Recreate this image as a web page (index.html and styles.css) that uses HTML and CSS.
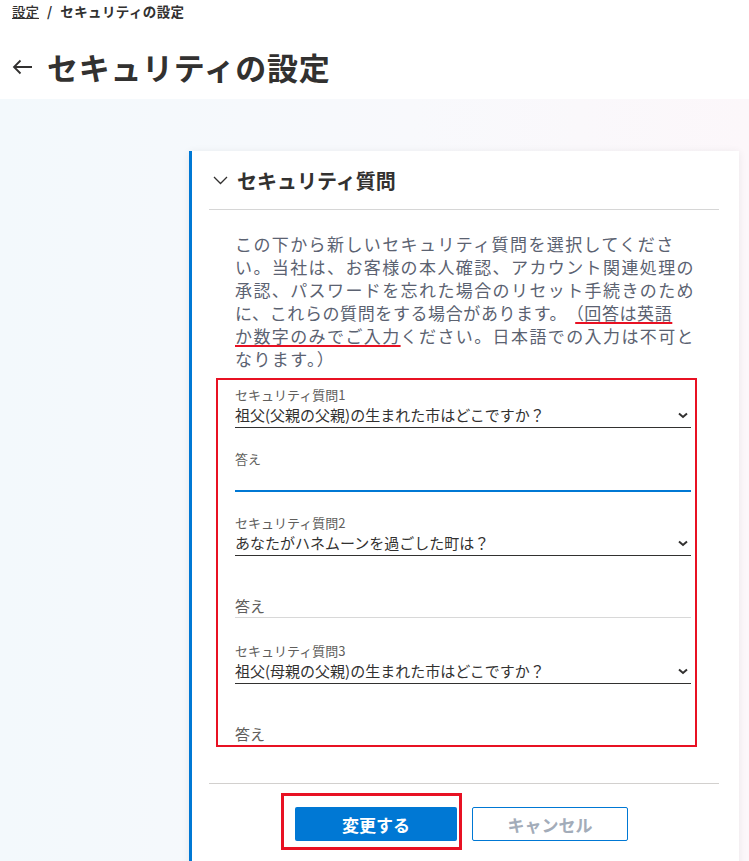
FILE: index.html
```html
<!DOCTYPE html>
<html lang="ja">
<head>
    <meta charset="UTF-8">
    <meta name="viewport" content="width=device-width, initial-scale=1.0">
    <title>セキュリティの設定</title>
    <link rel="stylesheet" href="styles.css">
</head>
<body>
    <header class="top">
        <nav class="crumbs">
            <a href="#">設定</a>
            <span class="sep">/</span>
            <span class="current">セキュリティの設定</span>
        </nav>
        <h1 class="page-title">
            <svg class="back" width="21" height="16" viewBox="0 0 21 16" fill="none" stroke="#323130" stroke-width="1.8">
                <path d="M20 8H2M8.5 1.5L2 8l6.5 6.5"/>
            </svg>
            セキュリティの設定
        </h1>
    </header>

    <main class="main">
        <section class="card">
            <div class="card-head">
                <svg class="toggle" width="15" height="9" viewBox="0 0 15 9" fill="none" stroke="#323130" stroke-width="1.3">
                    <path d="M1 1l6.5 6.5L14 1"/>
                </svg>
                <h2>セキュリティ質問</h2>
            </div>

            <div class="card-body">
                <p class="intro">
                    この下から新しいセキュリティ質問を選択してくださ<br>
                    い。当社は、お客様の本人確認、アカウント関連処理の<br>
                    承認、パスワードを忘れた場合のリセット手続きのため<br>
                    <span class="tight">に、これらの質問をする場合があります。<span class="mark gap">（回答は英語</span></span><br>
                    <span class="mark">か数字のみでご入力</span>ください。日本語での入力は不可と<br>
                    なります。）
                </p>

                <div class="fields">
                    <div class="qfield">
                        <label class="qlabel">セキュリティ質問1</label>
                        <div class="select">
                            <span>祖父(父親の父親)の生まれた市はどこですか？</span>
                            <svg class="caret" width="10" height="7" viewBox="0 0 10 7" fill="none" stroke="#323130" stroke-width="2"><path d="M1 1.5l4 3.5 4-3.5"/></svg>
                        </div>
                    </div>
                    <div class="answer focused">
                        <label class="alabel">答え</label>
                        <input class="ainput" type="text">
                    </div>

                    <div class="qfield">
                        <label class="qlabel">セキュリティ質問2</label>
                        <div class="select">
                            <span>あなたがハネムーンを過ごした町は？</span>
                            <svg class="caret" width="10" height="7" viewBox="0 0 10 7" fill="none" stroke="#323130" stroke-width="2"><path d="M1 1.5l4 3.5 4-3.5"/></svg>
                        </div>
                    </div>
                    <div class="answer">
                        <input class="ainput" type="text" placeholder="答え">
                    </div>

                    <div class="qfield">
                        <label class="qlabel">セキュリティ質問3</label>
                        <div class="select">
                            <span>祖父(母親の父親)の生まれた市はどこですか？</span>
                            <svg class="caret" width="10" height="7" viewBox="0 0 10 7" fill="none" stroke="#323130" stroke-width="2"><path d="M1 1.5l4 3.5 4-3.5"/></svg>
                        </div>
                    </div>
                    <div class="answer last">
                        <input class="ainput" type="text" placeholder="答え">
                    </div>
                </div>
            </div>

            <div class="card-foot">
                <span class="highlight">
                    <button class="btn primary">変更する</button>
                </span>
                <button class="btn secondary">キャンセル</button>
            </div>
        </section>
    </main>
</body>
</html>
```

FILE: styles.css
```css
body {
    margin: 0;
    font-family: "Noto Sans CJK JP", "Noto Sans", sans-serif;
    color: #323130;
    background: linear-gradient(90deg, #f3f9fc 0%, #f8f9fc 55%, #fcf7fa 100%);
    min-height: 100vh;
}
.top {
    background: white;
    height: 99px;
    padding: 2px 12px 0;
    box-sizing: border-box;
}
.crumbs {
    font-size: 13.5px;
    line-height: 18px;
    font-weight: 700;
    display: flex;
    gap: 8px;
}
.crumbs a {
    color: #323130;
    font-weight: 500;
    text-decoration: underline;
}
.crumbs .current {
    letter-spacing: 0.4px;
}
.page-title {
    margin: 27px 0 0;
    font-size: 31px;
    line-height: 40px;
    font-weight: 700;
    letter-spacing: 0.7px;
    display: flex;
    align-items: center;
    gap: 14px;
}
.page-title .back {
    flex: none;
}
.main {
    padding: 52px 10px 0 189px;
}
.card {
    width: 550px;
    box-sizing: border-box;
    background: white;
    border-left: 3px solid #0078d4;
    padding: 0 20px 30px 17px;
    box-shadow: 0 1px 8px rgba(0,0,0,0.07);
}
.card-head {
    height: 58px;
    display: flex;
    align-items: center;
    gap: 9px;
    padding-left: 4px;
    border-bottom: 1px solid #d6d6d6;
}
.card-head h2 {
    margin: 0;
    font-size: 20px;
    font-weight: 700;
}
.card-body {
    padding: 22px 0 0 26px;
}
.intro {
    margin: 0 0 8px;
    font-size: 17px;
    line-height: 23px;
    letter-spacing: 1.4px;
    color: #5b6271;
    white-space: nowrap;
}
.intro .tight {
    letter-spacing: 0.6px;
}
.mark {
    text-decoration: underline;
    text-decoration-color: #e81123;
    text-decoration-thickness: 2px;
    text-underline-offset: 2px;
}
.mark.gap {
    margin-left: 8px;
}
.fields {
    width: 481px;
    box-sizing: border-box;
    margin-left: -19px;
    border: 2px solid #e81123;
    padding: 7px 4px 0 17px;
}
.qfield {
    display: flex;
    flex-direction: column;
}
.qlabel, .alabel {
    font-size: 13px;
    line-height: 16px;
    color: #605e5c;
}
.select {
    height: 24px;
    border-bottom: 1px solid #323130;
    display: flex;
    align-items: center;
    justify-content: space-between;
    font-size: 15px;
    padding-right: 3px;
}
.select span {
    line-height: 22px;
}
.answer {
    display: flex;
    flex-direction: column;
    padding-top: 37px;
    margin-bottom: 25px;
}
.answer.focused {
    padding-top: 23px;
    margin-bottom: 23px;
}
.ainput {
    height: 25px;
    box-sizing: border-box;
    border: none;
    border-bottom: 1px solid #d8d8d8;
    padding: 0;
    font-family: inherit;
    font-size: 15px;
    outline: none;
    background: transparent;
}
.ainput::placeholder {
    color: #605e5c;
}
.answer.focused .ainput {
    border-bottom: 2px solid #0078d4;
}
.answer.last {
    margin-bottom: 0;
}
.answer.last .ainput {
    height: 24px;
    border-bottom: none;
}
.card-foot {
    margin-top: 36px;
    border-top: 1px solid #d2d0ce;
    padding: 9px 0 0 72px;
    display: flex;
    align-items: flex-start;
}
.highlight {
    border: 3px solid #e81123;
    padding: 11px 2px 6px 11px;
    display: flex;
}
.btn {
    height: 34px;
    font-family: inherit;
    font-size: 17px;
    font-weight: 700;
    border-radius: 2px;
    cursor: pointer;
}
.btn.primary {
    width: 162px;
    background: #0078d4;
    border: none;
    color: white;
}
.btn.secondary {
    width: 156px;
    margin: 14px 0 0 10px;
    background: white;
    border: 1px solid #0078d4;
    color: #a3acb9;
}
```
